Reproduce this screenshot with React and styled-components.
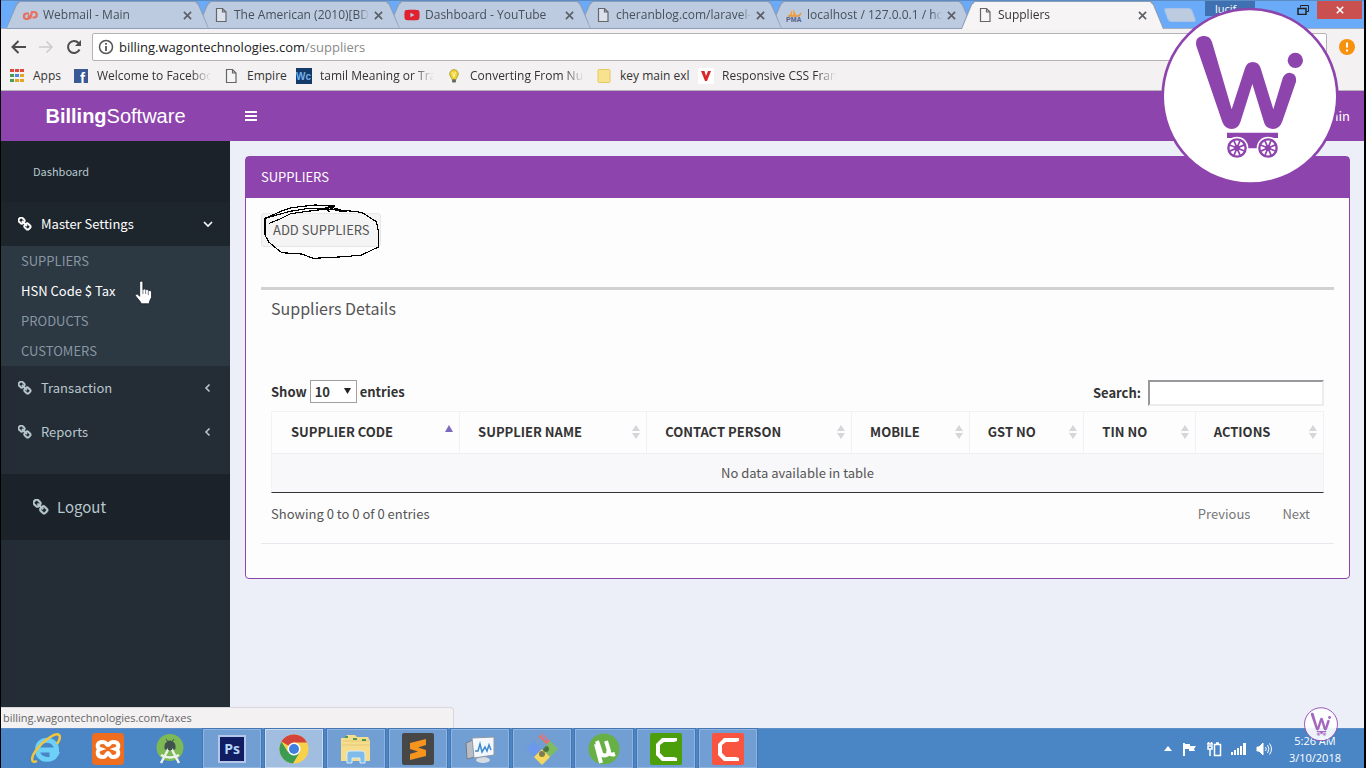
import React, { useState } from 'react';
import styled, { createGlobalStyle, css } from 'styled-components';
import { FaYoutube } from 'react-icons/fa';

const PURPLE = '#8e44ad';
const SITE_FONT = '"Noto Sans CJK SC", "Noto Sans", sans-serif';
const SYSTEM_FONT = '"Open Sans", "Noto Sans", sans-serif';

const GlobalStyle = createGlobalStyle`
  * {
    box-sizing: border-box;
  }
  body {
    margin: 0;
    background: #000;
    font-family: ${SITE_FONT};
    font-size: 13px;
    line-height: 20px;
    color: #555;
  }
  button, input, select {
    font: inherit;
    color: inherit;
  }
  a {
    color: inherit;
    text-decoration: none;
  }
  ul {
    list-style: none;
    margin: 0;
    padding: 0;
  }
`;

const Screen = styled.div`
  position: relative;
  display: flex;
  flex-direction: column;
  min-height: 100vh;
  padding: 0 2px 0 1px;
  overflow: hidden;
`;

/* ---------- browser ---------- */

const Browser = styled.header`
  font-family: ${SYSTEM_FONT};
  font-size: 12px;
  color: #333;
  background: #f3f1f2;
`;

const TabStrip = styled.div`
  display: flex;
  height: 29px;
  padding-left: 5px;
  background: #69abf8;
  border-top: 1px solid #5b8cc4;
  border-bottom: 1px solid #a5b0c2;
`;

const Tab = styled.button`
  position: relative;
  z-index: ${(p) => p.$order};
  display: flex;
  align-items: center;
  gap: 5px;
  flex: 0 1 203px;
  min-width: 0;
  height: 28px;
  margin-right: -12px;
  padding: 0 17px 0 16px;
  border: 0;
  background: none;
  color: ${(p) => (p.$active ? '#333' : '#47505c')};
  text-align: left;

  &::before,
  &::after {
    content: '';
    position: absolute;
    inset: 0;
    z-index: -1;
    background: #8b9db8;
    clip-path: polygon(0 100%, 10px 3px, 13px 0, calc(100% - 13px) 0, calc(100% - 10px) 3px, 100% 100%);
  }
  &::after {
    inset: ${(p) => (p.$active ? '1px 1px 0' : '1px 1px 1px')};
    background: ${(p) => (p.$active ? '#f6f4f5' : '#bccbe0')};
  }
  svg {
    flex: none;
  }
`;

const TabTitle = styled.span`
  flex: 1;
  overflow: hidden;
  white-space: nowrap;
  mask-image: linear-gradient(to right, #000 92%, transparent);
`;

const NewTab = styled.button`
  width: 28px;
  height: 14px;
  margin: 7px 0 0 14px;
  padding: 0;
  border: 1px solid #a9c3e6;
  border-radius: 3px;
  background: #bccbe0;
  transform: skewX(20deg);
`;

const WindowControls = styled.div`
  display: flex;
  align-items: flex-start;
  margin-left: auto;
`;

const UserBadge = styled.button`
  width: 50px;
  height: 15px;
  margin-right: 12px;
  padding: 0;
  border: 0;
  background: #3f70b2;
  color: #fff;
  font-size: 11px;
  line-height: 14px;
`;

const WindowButton = styled.button`
  display: flex;
  align-items: center;
  justify-content: center;
  width: ${(p) => (p.$close ? 45 : 22)}px;
  height: 18px;
  margin-right: ${(p) => (p.$close ? 2 : 0)}px;
  padding: 0;
  border: 0;
  background: ${(p) => (p.$close ? '#c9504f' : 'none')};
  color: ${(p) => (p.$close ? '#fff' : '#222')};
  & + & {
    margin-left: ${(p) => (p.$close ? 3 : 0)}px;
  }
`;

const Toolbar = styled.div`
  display: flex;
  align-items: center;
  gap: 12px;
  height: 34px;
  padding: 3px 9px 2px;
`;

const ToolButton = styled.button`
  display: flex;
  width: 16px;
  height: 16px;
  padding: 0;
  border: 0;
  background: none;
  color: ${(p) => (p.$disabled ? '#ccc' : '#4d4d4d')};
`;

const Omnibox = styled.div`
  display: flex;
  align-items: center;
  flex: 1;
  gap: 5px;
  height: 28px;
  margin-left: -2px;
  padding: 0 5px;
  border: 1px solid #b4b2b5;
  border-radius: 2px;
  background: #fff;
  font-size: 13px;
  color: #222;
  span {
    color: #8a8a8a;
  }
`;

const Bookmarks = styled.nav`
  display: flex;
  align-items: center;
  gap: 12px;
  height: 28px;
  padding: 0 8px 2px;
  border-bottom: 1px solid #b9b4bb;
`;

const Bookmark = styled.a`
  display: flex;
  align-items: center;
  gap: 8px;
  svg {
    flex: none;
  }
  span {
    width: ${(p) => p.$width}px;
    white-space: nowrap;
    ${(p) =>
      p.$fade &&
      css`
        overflow: hidden;
        mask-image: linear-gradient(to right, #000 82%, transparent);
      `}
  }
`;

/* ---------- application ---------- */

const AppHeader = styled.div`
  display: flex;
  align-items: center;
  height: 50px;
  background: ${PURPLE};
  color: #fff;
`;

const Brand = styled.a`
  width: 229px;
  text-align: center;
  font-family: "Liberation Sans", Arial, sans-serif;
  font-size: 20px;
`;

const MenuToggle = styled.button`
  display: flex;
  padding: 0 15px;
  border: 0;
  background: none;
`;

const UserLink = styled.a`
  margin-left: auto;
  padding-right: 14px;
`;

const Layout = styled.div`
  position: relative;
  display: flex;
  flex: 1;
  background: #eceff8;
`;

const Sidebar = styled.aside`
  flex: 0 0 229px;
  background: #242c35;
  color: #b8c7ce;
`;

const DashboardLink = styled.a`
  display: block;
  height: 61px;
  padding: 20px 32px;
  background: #1b2229;
  font-size: 11px;
`;

const MenuLink = styled.a`
  display: flex;
  align-items: center;
  gap: 9px;
  height: 44px;
  padding: 0 17px;
  background: ${(p) => (p.$open ? '#1e262d' : 'none')};
  color: ${(p) => (p.$open ? '#fff' : 'inherit')};
  span {
    flex: 1;
  }
`;

const SubMenu = styled.ul`
  background: #2c3842;
  color: #8896a3;
`;

const SubLink = styled.a`
  display: block;
  height: 30px;
  padding: 5px 20px;
  color: ${(p) => (p.$hover ? '#fff' : 'inherit')};
`;

const LogoutLink = styled.a`
  display: flex;
  align-items: center;
  gap: 8px;
  height: 66px;
  margin-top: 20px;
  padding: 0 32px;
  background: #1b2229;
  font-size: 15px;
`;

const Content = styled.main`
  flex: 1;
  min-width: 0;
  padding: 15px 14px 15px 15px;
`;

const Panel = styled.section`
  border: 1px solid ${PURPLE};
  border-radius: 4px;
  background: #fdfdfe;
`;

const PanelTitle = styled.h1`
  margin: 0;
  padding: 10px 15px 11px;
  background: ${PURPLE};
  color: #fff;
  font-size: 13px;
  font-weight: 400;
`;

const PanelBody = styled.div`
  padding: 15px 15px 34px;
`;

const AddArea = styled.div`
  position: relative;
  height: 74px;
`;

const AddButton = styled.button`
  height: 34px;
  padding: 0 10px 0 11px;
  border: 1px solid #e7e7e7;
  border-radius: 3px;
  background: #f4f4f4;
`;

const Details = styled.div`
  border-top: 3px solid #d2d2d2;
  border-bottom: 1px solid #e6e9ee;
  padding: 8px 10px 19px;
`;

const DetailsTitle = styled.h2`
  margin: 0 0 62px;
  font-size: 16px;
  line-height: 20px;
  font-weight: 400;
`;

const Controls = styled.div`
  display: flex;
  align-items: flex-start;
  justify-content: space-between;
  margin-bottom: 5px;
  color: #333;
  font-weight: 700;
  label {
    display: flex;
    align-items: center;
    gap: 3px;
  }
`;

const LengthSelect = styled.span`
  position: relative;
  display: flex;
  select {
    appearance: none;
    width: 47px;
    height: 23px;
    padding: 0 4px;
    border: 1px solid #a0a0a0;
    border-radius: 0;
    background: #fff;
  }
  svg {
    position: absolute;
    top: 8px;
    right: 6px;
    pointer-events: none;
  }
`;

const SearchInput = styled.input`
  width: 176px;
  height: 26px;
  margin-left: 4px;
  padding: 1px 4px;
  border: 2px solid;
  border-color: #98989c #ececef #ececef #98989c;
  background: #fff;
`;

const DataTable = styled.table`
  width: 100%;
  table-layout: fixed;
  border-collapse: separate;
  border-spacing: 0;
  border: 1px solid #f2f2f5;
  border-bottom: 1px solid #333;
  th {
    height: 42px;
    padding: 0 5px 1px 19px;
    border-bottom: 1px solid #f0f0f3;
    color: #333;
    text-align: left;
    white-space: nowrap;
    & + th {
      padding-left: 18px;
      border-left: 1px solid #f2f0f5;
    }
  }
  td {
    height: 38px;
    padding: 0;
    background: #f8f8fa;
    text-align: center;
  }
`;

const HeadCell = styled.div`
  display: flex;
  align-items: center;
  justify-content: space-between;
`;

const TableFooter = styled.div`
  display: flex;
  justify-content: space-between;
  margin-top: 11px;
`;

const Pager = styled.div`
  display: flex;
  gap: 32px;
  padding-right: 14px;
  color: #777;
  button {
    padding: 0;
    border: 0;
    background: none;
  }
`;

const StatusBubble = styled.div`
  position: absolute;
  left: 0;
  bottom: 0;
  width: 453px;
  height: 21px;
  padding: 0 2px;
  border: 1px solid #d8d6da;
  border-width: 1px 1px 0 0;
  border-radius: 0 4px 0 0;
  background: #f3f1f2;
  color: #666;
  font-family: ${SYSTEM_FONT};
  font-size: 11px;
`;

/* ---------- desktop ---------- */

const Taskbar = styled.footer`
  display: flex;
  justify-content: space-between;
  height: 40px;
  border-top: 1px solid #5f8fc6;
  background: #4a86c6;
  color: #fff;
  font-family: ${SYSTEM_FONT};
  font-size: 11px;
  line-height: 17px;
`;

const Programs = styled.div`
  display: flex;
  gap: 4px;
  padding-left: 16px;
`;

const Program = styled.button`
  display: flex;
  align-items: center;
  justify-content: center;
  width: 58px;
  height: 39px;
  padding: 0;
  border: 1px solid transparent;
  background: none;
  ${(p) =>
    p.$running &&
    css`
      border-color: #8fb4e0;
      background: #719fd4;
      box-shadow: 0 0 0 1px #4376b2;
    `}
  ${(p) =>
    p.$focused &&
    css`
      border-color: #c9daef;
      background: #a1bde0;
    `}
`;

const Tray = styled.div`
  display: flex;
  align-items: center;
  gap: 9px;
  padding-right: 23px;
`;

const Clock = styled.div`
  padding-left: 8px;
  text-align: center;
`;

const Floating = styled.div`
  position: absolute;
  z-index: 20;
  top: ${(p) => p.$top};
  right: ${(p) => p.$right};
  bottom: ${(p) => p.$bottom};
  left: ${(p) => p.$left};
  pointer-events: none;
  svg {
    display: block;
  }
`;

/* ---------- drawings ---------- */

const ChainIcon = ({ size = 14 }) => (
  <svg width={size} height={size} viewBox="64 60 1664 1664" fill="currentColor" stroke="currentColor" strokeWidth="60" aria-hidden="true">
    <path d="M1456 1216q0-40-28-68l-208-208q-28-28-68-28-42 0-72 32 3 3 19 18.5t21.5 21.5 15 19 13 25.5 3.5 27.5q0 40-28 68t-68 28q-15 0-27.5-3.5t-25.5-13-19-15-21.5-21.5-18.5-19q-33 31-33 73 0 40 28 68l206 207q27 27 68 27 40 0 68-26l147-146q28-28 28-67zm-703-705q0-40-28-68l-206-207q-28-28-68-28-39 0-68 27l-147 146q-28 28-28 67 0 40 28 68l208 208q27 27 68 27 42 0 72-31-3-3-19-18.5t-21.5-21.5-15-19-13-25.5-3.5-27.5q0-40 28-68t68-28q15 0 27.5 3.5t25.5 13 19 15 21.5 21.5 18.5 19q33-31 33-73zm895 705q0 120-85 203l-147 146q-83 83-203 83-121 0-204-85l-206-207q-83-83-83-203 0-123 88-209l-88-88q-86 88-208 88-120 0-204-84l-208-208q-84-84-84-204t85-203l147-146q83-83 203-83 121 0 204 85l206 207q83 83 83 203 0 123-88 209l88 88q86-88 208-88 120 0 204 84l208 208q84 84 84 204z" />
  </svg>
);

const Angle = ({ open }) => (
  <svg width="10" height="10" viewBox="0 0 10 10" fill="none" stroke="currentColor" strokeWidth="1.6" aria-hidden="true">
    <path d={open ? 'M1 3l4 4 4-4' : 'M6.5 1.5L3 5l3.500 3.500'} />
  </svg>
);

const PageIcon = () => (
  <svg width="16" height="16" viewBox="0 0 16 16" fill="#fafafa" fillOpacity="0.5" stroke="#666" strokeWidth="1.2" aria-hidden="true">
    <path d="M3.500 1.500h6l3.500 3.500v9.500h-9.500zM9.500 1.500v3.500h3.500" />
  </svg>
);

const CloseIcon = ({ size = 9, width = 1.8, color = '#5a5f66' }) => (
  <svg width={size} height={size} viewBox="0 0 10 10" stroke={color} strokeWidth={width} aria-hidden="true">
    <path d="M1 1l8 8M9 1L1 9" />
  </svg>
);

const WebmailIcon = () => (
  <svg width="16" height="16" viewBox="0 0 16 16" fill="none" stroke="#e8705c" strokeWidth="2.2" aria-hidden="true">
    <path d="M7 6.500H4.500a2.800 2.800 0 0 0-.5 5.500H6l1.500-4" />
    <path d="M8 12l2-7h2a2.500 2.500 0 0 1 0 5.500h-1.500" />
  </svg>
);

const FacebookIcon = () => (
  <svg width="16" height="16" viewBox="0 0 16 16" aria-hidden="true">
    <rect x="1" y="1" width="14" height="14" fill="#3b5795" />
    <text x="7" y="15" fontFamily="Liberation Sans" fontSize="15" fontWeight="700" fill="#fff">f</text>
  </svg>
);

const PmaIcon = () => (
  <svg width="16" height="16" viewBox="0 0 16 16" aria-hidden="true">
    <path d="M3 9L6 3v6zM7 9V2l4 7z" fill="#f3a340" />
    <path d="M2 9h11l2-3" fill="none" stroke="#e8963c" strokeWidth="1.500" />
    <text x="0" y="15" fontFamily="Liberation Sans" fontSize="7" fontWeight="700" fill="#555f8a">PMA</text>
  </svg>
);

const AppsIcon = () => {
  const colors = ['#e0483c', '#e0483c', '#e0483c', '#4a9c54', '#4a87e8', '#e3a428', '#4a9c54', '#e3a428', '#e3a428'];
  return (
    <svg width="16" height="16" viewBox="0 0 16 16" aria-hidden="true">
      {colors.map((color, i) => (
        <rect key={i} x={1 + (i % 3) * 5} y={1 + Math.floor(i / 3) * 5} width="4" height="3" fill={color} />
      ))}
    </svg>
  );
};

const WcIcon = () => (
  <svg width="16" height="16" viewBox="0 0 16 16" aria-hidden="true">
    <rect width="16" height="16" fill="#123a6b" />
    <text x="0" y="12" fontFamily="Liberation Sans" fontSize="10" fontWeight="700" fill="#72b2ea">Wc</text>
  </svg>
);

const BulbIcon = () => (
  <svg width="16" height="16" viewBox="0 0 16 16" aria-hidden="true">
    <path d="M8 1.500a4.500 4.500 0 0 0-3 7.700l1 2.300h4l1-2.300A4.500 4.500 0 0 0 8 1.500z" fill="#f2d233" stroke="#9d9a3a" strokeWidth="0.8" />
    <path d="M6.500 4l1.500 5 1.500-5" stroke="#fff6b0" fill="none" />
    <rect x="6" y="11.500" width="4" height="3" rx="1" fill="#5d6b58" />
  </svg>
);

const NoteIcon = () => (
  <svg width="16" height="16" viewBox="0 0 16 16" aria-hidden="true">
    <rect x="2" y="1.500" width="12" height="13" rx="1" fill="#f7e28d" stroke="#e5c868" />
  </svg>
);

const VIcon = () => (
  <svg width="16" height="16" viewBox="0 0 16 16" aria-hidden="true">
    <rect width="16" height="16" rx="2" fill="#fff" />
    <path d="M3 3h3.500L8 8l2-5h3L9 13H7z" fill="#d8262c" />
  </svg>
);

const SortIcon = ({ sorted }) =>
  sorted ? (
    <svg width="10" height="16" viewBox="0 0 10 16" aria-hidden="true">
      <path d="M1 8h8L5 1z" fill="#7d68bd" />
    </svg>
  ) : (
    <svg width="10" height="16" viewBox="0 0 10 16" fill="#d6d6da" aria-hidden="true">
      <path d="M1 7h8L5 1zM1 9h8l-4 6z" />
    </svg>
  );

const spokes = [0, 45, 90, 135];

const Wheel = ({ cx }) => (
  <g>
    <circle cx={cx} cy="444" r="34" fill="#fff" />
    <circle cx={cx} cy="444" r="26" fill="none" stroke={PURPLE} strokeWidth="7" />
    {spokes.map((a) => (
      <path key={a} d={`M${cx - 24} 444h48`} stroke={PURPLE} strokeWidth="5" transform={`rotate(${a + 22} ${cx} 444)`} />
    ))}
    <circle cx={cx} cy="444" r="9" fill={PURPLE} />
  </g>
);

const WagonLogo = ({ size, faded }) => (
  <svg width={size} height={size} viewBox="762 15 540 540" role="img" aria-label="Wagon Technologies">
    <circle cx="1032" cy="289" r="262" fill="#fff" fillOpacity={faded ? 0.9 : 1} stroke={PURPLE} strokeWidth={faded ? 14 : 8} />
    <g opacity={faded ? 0.8 : 1}>
      <path
        d="M871 138C867 116 878 108 895 108Q912 108 918 126L977 328L1017 205Q1023 186 1040 186Q1058 186 1064 205L1102 328L1129 238Q1135 218 1150 218Q1173 220 1170 245L1129 364Q1121 387 1101 387Q1082 387 1075 370L1039 252L1004 364Q997 387 977 387Q957 387 949 366Z"
        fill={PURPLE}
      />
      <circle cx="1168" cy="181" r="23" fill={PURPLE} />
      <path d="M963 398h153v16h-30l-32 31h-30l-31-31h-30z" fill={PURPLE} />
      <Wheel cx={993} />
      <Wheel cx={1086} />
    </g>
  </svg>
);

const Scribble = () => (
  <svg width="127" height="63" viewBox="780 180 381 189" fill="none" stroke="#000" strokeWidth="3.500" shapeRendering="crispEdges" aria-hidden="true">
    <path d="M795 235v50l12 22 38 31 60 4 35 13 95-5 50-5 50-24v-48l-6-28-44-28-45-5-60-5-50 6-58 8-30 15-34 14" />
    <path d="M795 235l50-22 30-10 70-8 60 3-20 6-65 2-50 8-75 21M985 199l55 16-30-3-22-10-10 5 11 9" />
  </svg>
);

const HandCursor = () => (
  <svg width="20" height="26" viewBox="0 0 18 24" aria-hidden="true">
    <path
      d="M5 2.500q0-1.500 1.500-1.500T8 2.500V9q1-1.500 2.500-.3Q12.500 8 13 9.700q2-.7 3 1.300v5l-2 4v2H6.500l-1-2L1 14.500q0-2 2-1.500l2 2z"
      fill="#fff"
      stroke="#1a222a"
      strokeWidth="0.8"
    />
    <path d="M8 9v4M10.500 9v4M13 10v4" stroke="#556" strokeWidth="0.7" />
  </svg>
);

const IeIcon = () => (
  <svg width="34" height="34" viewBox="0 0 34 34" fill="none" aria-hidden="true">
    <path d="M8.500 18h19c0-13-19-13-19 0 0 11 15 12 18.500 4.500h-6.500" stroke="#6fd0f7" strokeWidth="5" />
    <path d="M8 29C2 32 1 26 8 17 15 8 27 0 30 3c2 2 0 6-2 9" stroke="#f2c63a" strokeWidth="2.500" />
  </svg>
);

const XamppIcon = () => (
  <svg width="32" height="32" viewBox="0 0 32 32" aria-hidden="true">
    <rect width="32" height="32" rx="4" fill="#ee6d1f" />
    <path d="M11 9c4 0 3 3 5 3s1-3 5-3c7 0 6 6 3 7 3 1 4 8-3 8-4 0-3-4-5-4s-1 4-5 4c-7 0-6-7-3-8-3-1-4-7 3-7z" fill="none" stroke="#fff" strokeWidth="4" />
  </svg>
);

const AndroidStudioIcon = () => (
  <svg width="32" height="32" viewBox="0 0 32 32" fill="none" aria-hidden="true">
    <circle cx="16" cy="14.500" r="13.500" fill="#7db955" />
    <path d="M11 13a5 5 0 0 1 10 0v3H11zM12 6l2 3M20 6l-2 3" fill="#40524d" stroke="#40524d" />
    <path d="M15 15L7 30M17 15l8 15M7 22q9 5 18 0" stroke="#edf2ee" strokeWidth="2.500" />
    <circle cx="16" cy="15" r="2.500" fill="#40524d" />
  </svg>
);

const PhotoshopIcon = () => (
  <svg width="28" height="28" viewBox="0 0 28 28" aria-hidden="true">
    <rect x="1" y="1" width="26" height="26" fill="#101d62" stroke="#b5c6e8" strokeWidth="2" />
    <text x="14" y="19" textAnchor="middle" fontFamily="Open Sans" fontSize="14" fontWeight="700" fill="#b7d5f6">Ps</text>
  </svg>
);

const ChromeIcon = () => (
  <svg width="30" height="30" viewBox="0 0 30 30" aria-hidden="true">
    <circle cx="15" cy="15" r="14.500" fill="#f7d14a" />
    <path d="M15 15L2.500 7.500A14.500 14.500 0 0 1 28 8.500H15z" fill="#d5443a" />
    <path d="M2.400 7.700A14.500 14.500 0 0 0 14 29.500l6.500-11L9 18z" fill="#3d9b52" />
    <circle cx="15" cy="15" r="6.500" fill="#fff" />
    <circle cx="15" cy="15" r="5" fill="#3f7fe0" />
  </svg>
);

const ExplorerIcon = () => (
  <svg width="34" height="32" viewBox="0 0 34 32" aria-hidden="true">
    <path d="M2 28V5h4l2-3h8l2 2h11l2 4v20z" fill="#f5dd8b" />
    <path d="M4 8h26M3 12h28" stroke="#e3c778" />
    <path d="M6 4h3M14 6h4M23 7h4" stroke="#4c9a50" strokeWidth="2" />
    <path d="M8 30v-9q0-3 3-3h12q3 0 3 3v9h-5v-5h-8v5z" fill="#7fbbeb" stroke="#d6ecfb" />
  </svg>
);

const SublimeIcon = () => (
  <svg width="32" height="32" viewBox="0 0 32 32" aria-hidden="true">
    <rect width="32" height="32" rx="2" fill="#474747" />
    <path d="M24 6v6l-8 2.500 8 2.500v6L8 27v-6l8-2.500L8 16v-6z" fill="#f7941e" />
  </svg>
);

const MonitorIcon = () => (
  <svg width="32" height="30" viewBox="0 0 32 30" aria-hidden="true">
    <path d="M2 9l9-4v18l-8 2z" fill="#b9bec6" stroke="#737b85" />
    <ellipse cx="19" cy="26" rx="7" ry="3" fill="#d7dbe2" />
    <path d="M8 4l22-1v18l-20 3z" fill="#f4f7fb" stroke="#8f98a4" />
    <path d="M11 17h3l2-7 2 8 3-5 2 4 2-6 2 5" fill="none" stroke="#3c8bd0" strokeWidth="1.500" />
  </svg>
);

const GitIcon = () => (
  <svg width="34" height="34" viewBox="0 0 34 34" aria-hidden="true">
    <path d="M17 1l8 8-8 8-8-8z" fill="#ee6f6a" />
    <path d="M9 9l8 8-8 8-8-8z" fill="#6b98ea" />
    <path d="M25 9l8 8-8 8-8-8z" fill="#7fbb60" />
    <path d="M17 17l8 8-8 8-8-8z" fill="#f5d85c" />
    <circle cx="21" cy="17" r="3" fill="#49763c" />
    <circle cx="17" cy="22" r="3" fill="#7d7c52" />
    <path d="M9 9l8 8 4-4-8-8M15 1l7 8" fill="#719fd4" stroke="#719fd4" strokeWidth="1.500" />
  </svg>
);

const TorrentIcon = () => (
  <svg width="32" height="32" viewBox="0 0 32 32" fill="none" aria-hidden="true">
    <circle cx="16" cy="16" r="15.500" fill="#67b045" />
    <path d="M9 8l4 12c1.500 4 8 3 8-2L18 8M20 17c1 5 4 5 7 4M8 11l5 19" stroke="#fff" strokeWidth="4" />
  </svg>
);

const CamtasiaIcon = ({ color }) => (
  <svg width="32" height="32" viewBox="0 0 32 32" fill="none" aria-hidden="true">
    <rect width="32" height="32" rx="2" fill={color} />
    <path d="M27 5v3l-3 1H14l-4 3v8l4 4h10l3 1v3H12l-6-6V11l6-6z" fill="#fff" />
  </svg>
);

/* ---------- data ---------- */

const tabs = [
  { title: 'Webmail - Main', icon: <WebmailIcon /> },
  { title: 'The American (2010)[BDRip]', icon: <PageIcon /> },
  { title: 'Dashboard - YouTube', icon: <FaYoutube size={16} color="#e02230" /> },
  { title: 'cheranblog.com/laravel-', icon: <PageIcon /> },
  { title: 'localhost / 127.0.0.1 / hc', icon: <PmaIcon /> },
  { title: 'Suppliers', icon: <PageIcon />, active: true },
];

const bookmarks = [
  { title: 'Apps', icon: <AppsIcon />, width: 28 },
  { title: 'Welcome to Facebook', icon: <FacebookIcon />, width: 114, fade: true },
  { title: 'Empire', icon: <PageIcon />, width: 37 },
  { title: 'tamil Meaning or Trans', icon: <WcIcon />, width: 114, fade: true },
  { title: 'Converting From Num', icon: <BulbIcon />, width: 114, fade: true },
  { title: 'key main exl', icon: <NoteIcon />, width: 66 },
  { title: 'Responsive CSS Frame', icon: <VIcon />, width: 114, fade: true },
];

const columns = [
  { title: 'SUPPLIER CODE', width: '17.8%', sorted: true },
  { title: 'SUPPLIER NAME', width: '17.8%' },
  { title: 'CONTACT PERSON', width: '19.5%' },
  { title: 'MOBILE', width: '11.2%' },
  { title: 'GST NO', width: '10.9%' },
  { title: 'TIN NO', width: '10.6%' },
  { title: 'ACTIONS', width: '12.2%' },
];

const programs = [
  { name: 'Internet Explorer', icon: <IeIcon /> },
  { name: 'XAMPP', icon: <XamppIcon /> },
  { name: 'Android Studio', icon: <AndroidStudioIcon /> },
  { name: 'Photoshop', icon: <PhotoshopIcon />, running: true },
  { name: 'Chrome', icon: <ChromeIcon />, running: true, focused: true },
  { name: 'Explorer', icon: <ExplorerIcon />, running: true },
  { name: 'Sublime Text', icon: <SublimeIcon />, running: true },
  { name: 'Monitor', icon: <MonitorIcon />, running: true },
  { name: 'Git', icon: <GitIcon />, running: true },
  { name: 'uTorrent', icon: <TorrentIcon />, running: true },
  { name: 'Camtasia', icon: <CamtasiaIcon color="#4c9e0b" />, running: true },
  { name: 'Camtasia Recorder', icon: <CamtasiaIcon color="#f9543f" />, running: true },
];

function BrowserBar() {
  return (
    <Browser>
      <TabStrip>
        {tabs.map((tab, i) => (
          <Tab key={tab.title} $active={tab.active} $order={tab.active ? 10 : 9 - i}>
            {tab.icon}
            <TabTitle>{tab.title}</TabTitle>
            <CloseIcon />
          </Tab>
        ))}
        <NewTab aria-label="New tab" />
        <WindowControls>
          <UserBadge>lucif...</UserBadge>
          <WindowButton aria-label="Minimize">
            <svg width="10" height="14"><path d="M0 12h10" stroke="#222" strokeWidth="2" /></svg>
          </WindowButton>
          <WindowButton aria-label="Restore">
            <svg width="12" height="10" fill="none" stroke="#222">
              <path d="M3.500 2.500v-2h8v6h-2" />
              <path d="M1 3.500h8v6H1z" strokeWidth="1.500" />
            </svg>
          </WindowButton>
          <WindowButton $close aria-label="Close">
            <CloseIcon size={8} width={2} color="#fff" />
          </WindowButton>
        </WindowControls>
      </TabStrip>
      <Toolbar>
        <ToolButton aria-label="Back">
          <svg width="16" height="16" fill="none" stroke="currentColor" strokeWidth="2"><path d="M16 8H3M8.500 2L2.500 8l6 6" /></svg>
        </ToolButton>
        <ToolButton aria-label="Forward" $disabled>
          <svg width="16" height="16" fill="none" stroke="currentColor" strokeWidth="1.500"><path d="M1 8h13M8.500 2.500L14 8l-5.500 5.500" /></svg>
        </ToolButton>
        <ToolButton aria-label="Reload">
          <svg width="16" height="16" fill="none" stroke="currentColor" strokeWidth="2">
            <path d="M13.500 10.500A6 6 0 1 1 12.500 4" />
            <path d="M15 1v6H9z" fill="currentColor" stroke="none" />
          </svg>
        </ToolButton>
        <Omnibox>
          <svg width="16" height="16" fill="none" stroke="#555" strokeWidth="1.500">
            <circle cx="8" cy="8" r="6.500" />
            <path d="M8 7v5M8 4v1.700" strokeWidth="1.800" />
          </svg>
          <div>billing.wagontechnologies.com<span>/suppliers</span></div>
        </Omnibox>
        <ToolButton aria-label="Update">
          <svg width="16" height="16">
            <circle cx="8" cy="8" r="8" fill="#f7920f" />
            <path d="M8 3.500v5M8 10.500v2" stroke="#fff" strokeWidth="2" />
          </svg>
        </ToolButton>
      </Toolbar>
      <Bookmarks>
        {bookmarks.map((b) => (
          <Bookmark key={b.title} href="#" $width={b.width} $fade={b.fade}>
            {b.icon}
            <span>{b.title}</span>
          </Bookmark>
        ))}
      </Bookmarks>
    </Browser>
  );
}

function SideMenu() {
  return (
    <Sidebar>
      <DashboardLink href="#">Dashboard</DashboardLink>
      <MenuLink href="#" $open>
        <ChainIcon />
        <span>Master Settings</span>
        <Angle open />
      </MenuLink>
      <SubMenu>
        <li><SubLink href="#">SUPPLIERS</SubLink></li>
        <li><SubLink href="#" $hover>HSN Code $ Tax</SubLink></li>
        <li><SubLink href="#">PRODUCTS</SubLink></li>
        <li><SubLink href="#">CUSTOMERS</SubLink></li>
      </SubMenu>
      <MenuLink href="#">
        <ChainIcon />
        <span>Transaction</span>
        <Angle />
      </MenuLink>
      <MenuLink href="#">
        <ChainIcon />
        <span>Reports</span>
        <Angle />
      </MenuLink>
      <LogoutLink href="#">
        <ChainIcon size={16} />
        <span>Logout</span>
      </LogoutLink>
    </Sidebar>
  );
}

function SuppliersPanel() {
  const [length, setLength] = useState('10');
  const [search, setSearch] = useState('');

  return (
    <Panel>
      <PanelTitle>SUPPLIERS</PanelTitle>
      <PanelBody>
        <AddArea>
          <AddButton>ADD SUPPLIERS</AddButton>
          <Floating $top="-13px" $left="-1px">
            <Scribble />
          </Floating>
        </AddArea>
        <Details>
          <DetailsTitle>Suppliers Details</DetailsTitle>
          <Controls>
            <label htmlFor="length">
              Show
              <LengthSelect>
                <select id="length" value={length} onChange={(e) => setLength(e.target.value)}>
                  <option>10</option>
                  <option>25</option>
                  <option>50</option>
                </select>
                <svg width="7" height="6"><path d="M0 0h7L3.500 6z" fill="#222" /></svg>
              </LengthSelect>
              entries
            </label>
            <label htmlFor="search">
              Search:
              <SearchInput id="search" type="search" value={search} onChange={(e) => setSearch(e.target.value)} />
            </label>
          </Controls>
          <DataTable>
            <colgroup>
              {columns.map((c) => (
                <col key={c.title} width={c.width} />
              ))}
            </colgroup>
            <thead>
              <tr>
                {columns.map((c) => (
                  <th key={c.title}>
                    <HeadCell>
                      {c.title}
                      <SortIcon sorted={c.sorted} />
                    </HeadCell>
                  </th>
                ))}
              </tr>
            </thead>
            <tbody>
              <tr>
                <td colSpan={columns.length}>No data available in table</td>
              </tr>
            </tbody>
          </DataTable>
          <TableFooter>
            <div>Showing 0 to 0 of 0 entries</div>
            <Pager>
              <button>Previous</button>
              <button>Next</button>
            </Pager>
          </TableFooter>
        </Details>
      </PanelBody>
    </Panel>
  );
}

function DesktopBar() {
  return (
    <Taskbar>
      <Programs>
        {programs.map((p) => (
          <Program key={p.name} aria-label={p.name} $running={p.running} $focused={p.focused}>
            {p.icon}
          </Program>
        ))}
      </Programs>
      <Tray>
        <svg width="8" height="5"><path d="M0 5h8L4 0z" fill="#fff" /></svg>
        <svg width="16" height="16" viewBox="0 0 16 16">
          <path d="M3 2v13" stroke="#fff" strokeWidth="2" />
          <path d="M4 3h5v2h6l-2 3 1 2H8V8H4z" fill="#fff" />
        </svg>
        <svg width="16" height="16" viewBox="0 0 16 16" fill="none" stroke="#fff">
          <path d="M1 3h6M2 5v3h4V5zM4 8v7M2.500 1v2M5.500 1v2" strokeWidth="1.500" />
          <path d="M8.500 3.500h6v11h-6zM10 2h3" strokeWidth="1.500" />
        </svg>
        <svg width="16" height="16" viewBox="0 0 16 16" fill="#fff">
          <path d="M0 11h2v3H0zM3 9h2v5H3zM6 7h2v7H6zM9 5h2v9H9zM12 2h3v12h-3z" />
        </svg>
        <svg width="16" height="16" viewBox="0 0 16 16" fill="none" stroke="#fff">
          <path d="M1 6h2l4-4v12l-4-4H1z" fill="#fff" />
          <path d="M9.500 6q1.500 2 0 4M11.500 4q3 4 0 8M13.500 2.500q4 5.500 0 11" />
        </svg>
        <Clock>
          <div>5:26 AM</div>
          <div>3/10/2018</div>
        </Clock>
      </Tray>
    </Taskbar>
  );
}

export default function App() {
  return (
    <>
      <GlobalStyle />
      <Screen>
        <BrowserBar />
        <AppHeader>
          <Brand href="#"><b>Billing</b>Software</Brand>
          <MenuToggle aria-label="Toggle navigation">
            <svg width="12" height="11" fill="#fff"><path d="M0 0h12v2H0zM0 4h12v2H0zM0 8h12v2H0z" /></svg>
          </MenuToggle>
          <UserLink href="#">Admin</UserLink>
        </AppHeader>
        <Layout>
          <SideMenu />
          <Content>
            <SuppliersPanel />
          </Content>
          <Floating $top="139px" $left="133px">
            <HandCursor />
          </Floating>
          <StatusBubble>billing.wagontechnologies.com/taxes</StatusBubble>
        </Layout>
        <DesktopBar />
        <Floating $top="5px" $right="26px">
          <WagonLogo size={180} />
        </Floating>
        <Floating $bottom="27px" $right="28px">
          <WagonLogo size={34} faded />
        </Floating>
      </Screen>
    </>
  );
}
